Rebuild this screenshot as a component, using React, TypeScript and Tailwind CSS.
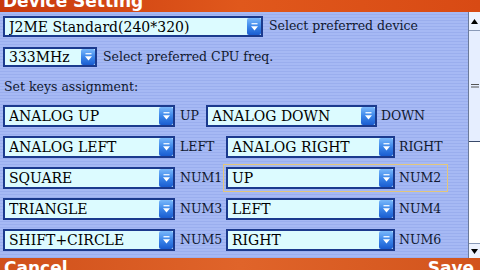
import React from 'react';

const stripes =
  "bg-[#a3b6f2] bg-[repeating-linear-gradient(to_bottom,#a6b9f4_0px,#a6b9f4_2px,#9aaeee_2px,#9aaeee_3px)]";

const DropButton = () => (
  <div className="w-[14px] h-full shrink-0 rounded-[2px] bg-gradient-to-b from-[#7ab8fa] via-[#3c86ea] to-[#1a5cd0] flex items-center justify-center">
    <svg width="9" height="10" viewBox="0 0 9 10">
      <rect x="1.5" y="1" width="6" height="1.4" fill="#e8f2ff" />
      <path d="M1 4.2 H8 L4.5 8.4 Z" fill="#ffffff" />
    </svg>
  </div>
);

interface SelectProps {
  value: string;
  width: number;
  height?: number;
}

const Select = ({ value, width, height = 22 }: SelectProps) => (
  <div
    className="flex items-stretch shrink-0 border-2 border-[#1b3a8e] bg-[#dcfbff] pl-[4px]"
    style={{ width, height }}
  >
    <span className="flex-1 flex items-center text-[14px] leading-none text-black whitespace-nowrap overflow-hidden">
      {value}
    </span>
    <DropButton />
  </div>
);

interface KeyRow {
  left: string;
  leftKey: string;
  right: string;
  rightKey: string;
  gap: number;
  rightWidth: number;
  focused?: boolean;
}

const keyRows: KeyRow[] = [
  { left: 'ANALOG UP', leftKey: 'UP', right: 'ANALOG DOWN', rightKey: 'DOWN', gap: 31, rightWidth: 171 },
  { left: 'ANALOG LEFT', leftKey: 'LEFT', right: 'ANALOG RIGHT', rightKey: 'RIGHT', gap: 51, rightWidth: 169 },
  { left: 'SQUARE', leftKey: 'NUM1', right: 'UP', rightKey: 'NUM2', gap: 51, rightWidth: 169, focused: true },
  { left: 'TRIANGLE', leftKey: 'NUM3', right: 'LEFT', rightKey: 'NUM4', gap: 51, rightWidth: 169 },
  { left: 'SHIFT+CIRCLE', leftKey: 'NUM5', right: 'RIGHT', rightKey: 'NUM6', gap: 51, rightWidth: 169 },
  { left: 'CROSS', leftKey: 'NUM7', right: 'DOWN', rightKey: 'NUM8', gap: 51, rightWidth: 169 },
];

export default function App() {
  return (
    <div className="w-[480px] h-[270px] overflow-hidden flex flex-col font-['DejaVu_Serif',serif] text-[#101830]">
      {/* Title bar */}
      <div className="h-[12px] shrink-0 overflow-hidden relative bg-gradient-to-r from-[#c8380c] via-[#e0581c] to-[#d84a14]">
        <div className="absolute left-[3px] top-[-7px] font-['DejaVu_Sans',sans-serif] font-bold text-[17px] leading-[17px] text-white">
          Device Setting
        </div>
      </div>

      <div className="flex-1 flex min-h-0">
        {/* Content */}
        <div className={`flex-1 overflow-hidden pl-[3px] pt-[4px] ${stripes}`}>
          <div className="flex items-center h-[21px]">
            <Select value="J2ME Standard(240*320)" width={260} height={21} />
            <span className="ml-[6px] text-[12.5px] whitespace-nowrap">Select preferred device</span>
          </div>
          <div className="flex items-center h-[20px] mt-[10px]">
            <Select value="333MHz" width={94} height={20} />
            <span className="ml-[6px] text-[12.5px] whitespace-nowrap">Select preferred CPU freq.</span>
          </div>
          <div className="h-[20px] mt-[10px] flex items-center pl-[1px] text-[12.5px]">
            Set keys assignment:
          </div>
          <div className="flex flex-col gap-[9px] mt-[8px]">
            {keyRows.map((row) => (
              <div key={row.left} className="flex items-center h-[22px]">
                <Select value={row.left} width={172} />
                <span className="pl-[5px] text-[12.5px] whitespace-nowrap" style={{ width: row.gap }}>
                  {row.leftKey}
                </span>
                {row.focused ? (
                  <div className="flex items-center border border-[#e2c67c] -ml-[3px] pl-[2px] py-[2px] w-[225px]">
                    <Select value={row.right} width={row.rightWidth} />
                    <span className="pl-[4px] text-[12.5px]">{row.rightKey}</span>
                  </div>
                ) : (
                  <>
                    <Select value={row.right} width={row.rightWidth} />
                    <span className="pl-[4px] text-[12.5px]">{row.rightKey}</span>
                  </>
                )}
              </div>
            ))}
          </div>
        </div>

        {/* Scrollbar */}
        <div className="w-[12px] shrink-0 bg-white border-l border-[#6a7a9a] flex flex-col">
          <div className="h-[19px] flex items-center justify-center border-b border-[#8a9ab8] bg-[#eef3ff]">
            <svg width="7" height="5" viewBox="0 0 7 5">
              <path d="M0 5 L3.5 0 L7 5 Z" fill="#000" />
            </svg>
          </div>
          <div className="h-[111px] bg-[#e6eeff] border-b border-[#3a4a6a] flex items-center justify-center">
            <svg width="8" height="4" viewBox="0 0 8 4">
              <rect x="0" y="0" width="8" height="1" fill="#555" />
              <rect x="0" y="2.5" width="8" height="1" fill="#555" />
            </svg>
          </div>
          <div className="flex-1" />
          <div className="h-[15px] flex items-center justify-center border-t border-[#8a9ab8] bg-[#eef3ff]">
            <svg width="7" height="5" viewBox="0 0 7 5">
              <path d="M0 0 L7 0 L3.5 5 Z" fill="#000" />
            </svg>
          </div>
        </div>
      </div>

      {/* Bottom bar */}
      <div className="h-[12px] shrink-0 overflow-hidden relative bg-gradient-to-r from-[#d0501a] via-[#e0642a] to-[#d2541c]">
        <div className="absolute left-[4px] top-[2px] font-['DejaVu_Sans',sans-serif] font-bold text-[17px] leading-[17px] text-white">
          Cancel
        </div>
        <div className="absolute right-[6px] top-[2px] font-['DejaVu_Sans',sans-serif] font-bold text-[17px] leading-[17px] text-white">
          Save
        </div>
      </div>
    </div>
  );
}
